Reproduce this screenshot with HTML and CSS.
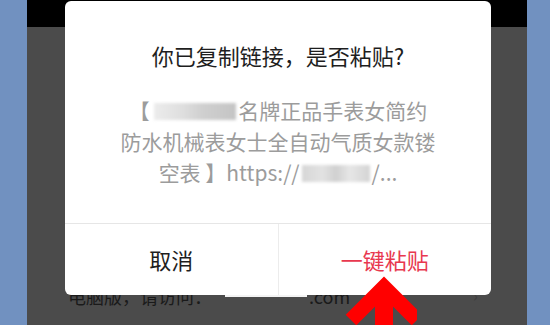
FILE: index.html
```html
<!DOCTYPE html>
<html lang="zh-CN">
<head>
<meta charset="utf-8">
<link rel="stylesheet" href="styles.css">
</head>
<body>
<div class="screen">
  <div class="side side-left"></div>
  <div class="phone">
    <div class="statusbar"></div>
    <div class="page">
      <div class="under-row">
        <span class="under-text">电脑版，请访问：</span>
        <span class="redact-white"></span>
        <span class="under-text">.com</span>
        <span class="chev">›</span>
      </div>
    </div>
    <div class="dialog">
      <div class="dialog-body">
        <div class="title">你已复制链接，是否粘贴?</div>
        <div class="content">
          <div class="line">【 <span class="blur blur1"></span>名牌正品手表女简约</div>
          <div class="line">防水机械表女士全自动气质女款镂</div>
          <div class="line">空表 】https://<span class="blur blur2"></span>/...</div>
        </div>
      </div>
      <div class="buttons">
        <div class="btn btn-cancel">取消</div>
        <div class="btn btn-ok">一键粘贴</div>
      </div>
    </div>
    <svg class="arrow" width="100" height="60" viewBox="0 0 100 60">
      <polyline points="34,47 67,14 100,47" fill="none" stroke="#ff0000" stroke-width="15" stroke-linejoin="miter"/>
      <rect x="58" y="14" width="18" height="50" fill="#ff0000"/>
    </svg>
  </div>
  <div class="side side-right"></div>
</div>
</body>
</html>
```

FILE: styles.css
```css
html, body {
  margin: 0;
  padding: 0;
}
body {
  width: 550px;
  height: 325px;
  overflow: hidden;
  font-family: "Noto Sans CJK SC", "Noto Sans", sans-serif;
}
.screen {
  display: flex;
  width: 550px;
  height: 325px;
}
.side {
  background: #7191c0;
}
.side-left {
  width: 27px;
}
.side-right {
  width: 23px;
}
.phone {
  position: relative;
  width: 500px;
  display: flex;
  flex-direction: column;
}
.statusbar {
  height: 27px;
  background: #000;
}
.page {
  flex: 1;
  background: #4b4b4b;
  padding-top: 256px;
}
.under-row {
  display: flex;
  align-items: center;
  height: 26px;
  padding-left: 41px;
  position: relative;
}
.under-text {
  font-size: 18px;
  line-height: 26px;
  color: #1a1a1a;
}
.redact-white {
  display: inline-block;
  align-self: flex-start;
  width: 82px;
  height: 14px;
  margin: 0 2px 0 13px;
  background: #f4f4f4;
}
.chev {
  position: absolute;
  left: 446px;
  top: 0;
  font-size: 16px;
  color: #3e3e3e;
}
.dialog {
  position: absolute;
  left: 38px;
  top: 1px;
  width: 426px;
  height: 294px;
  background: #fff;
  border-radius: 6px;
  display: flex;
  flex-direction: column;
}
.dialog-body {
  height: 222px;
  text-align: center;
}
.title {
  padding-top: 39px;
  font-size: 22px;
  line-height: 30px;
  color: #1e1e1e;
}
.content {
  margin-top: 25px;
  font-size: 21px;
  line-height: 31px;
  color: #9c9c9c;
}
.blur {
  display: inline-block;
  height: 17px;
  vertical-align: -1px;
  filter: blur(1.5px);
}
.blur1 {
  width: 82px;
  margin-right: 2px;
  background: linear-gradient(to right, #ececec 0%, #dedede 35%, #cfcfcf 60%, #c4c4c4 100%);
}
.blur2 {
  width: 68px;
  margin: 0 2px;
  background: linear-gradient(to right, #d6d6d6 0%, #e2e2e2 30%, #d0d0d0 50%, #e6e6e6 70%, #d4d4d4 100%);
}
.buttons {
  flex: 1;
  display: flex;
  border-top: 1px solid #e6e6e6;
}
.btn {
  flex: 1;
  display: flex;
  align-items: center;
  justify-content: center;
  padding-bottom: 2px;
  font-size: 22px;
}
.btn-cancel {
  color: #1e1e1e;
  border-right: 1px solid #ececec;
}
.btn-ok {
  color: #e8384f;
}
.arrow {
  position: absolute;
  left: 290px;
  top: 273px;
}
```
